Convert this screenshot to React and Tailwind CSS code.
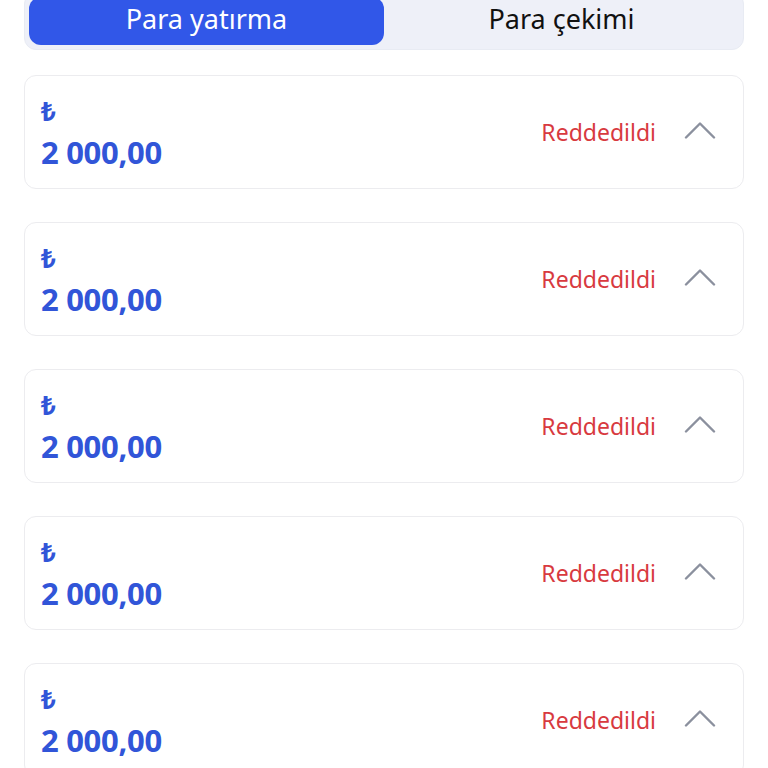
import { useState } from "react";

const items = [1, 2, 3, 4, 5].map((id) => ({ id, amount: "2 000,00", status: "Reddedildi" }));

function Chevron() {
    return (
        <svg width="32" height="18" viewBox="0 0 32 18" fill="none" className="shrink-0 -mt-1">
            <polyline points="2,16.5 16,2.5 30,16.5" stroke="#8b909e" strokeWidth="2.4" strokeLinecap="round" strokeLinejoin="round" />
        </svg>
    );
}

export default function App() {
    const [tab, setTab] = useState("deposit");

    return (
        <div className="min-h-screen bg-white px-6 font-['Noto_Sans',sans-serif] overflow-hidden">
            {/* Tabs */}
            <div className="mt-[-8px] flex p-1 bg-[#eef0f8] rounded-xl border border-[#e8ebf3]">
                <button
                    onClick={() => setTab("deposit")}
                    className={`flex-1 h-12 pb-[6px] rounded-xl text-[27px] leading-none ${tab === "deposit" ? "bg-[#3157e8] text-white" : "text-[#111]"}`}
                >
                    Para yatırma
                </button>
                <button
                    onClick={() => setTab("withdraw")}
                    className={`flex-1 h-12 pb-[6px] rounded-xl text-[27px] leading-none ${tab === "withdraw" ? "bg-[#3157e8] text-white" : "text-[#111]"}`}
                >
                    Para çekimi
                </button>
            </div>

            {/* List */}
            <div className="mt-[25px] flex flex-col gap-[33px]">
                {items.map((item) => (
                    <div key={item.id} className="flex items-center justify-between border border-[#ececef] rounded-xl pl-4 pr-[27px] pt-[18px] pb-[18px]">
                        <div className="text-[#3155d8] font-bold">
                            <div className="mt-[3px] text-[26px] leading-[28px]">₺</div>
                            <div className="mt-[9px] text-[31px] leading-[36px] tracking-[-0.3px]">{item.amount}</div>
                        </div>
                        <div className="flex items-center gap-7">
                            <span className="text-[23px] text-[#d83a3f]">{item.status}</span>
                            <Chevron />
                        </div>
                    </div>
                ))}
            </div>
        </div>
    );
}
